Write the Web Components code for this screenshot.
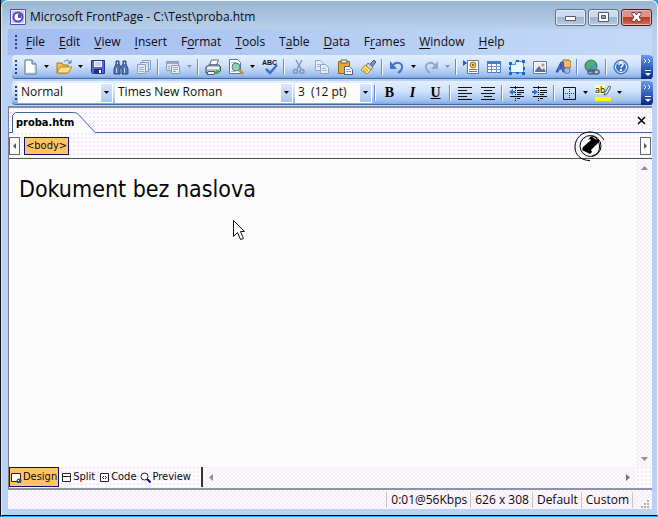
<!DOCTYPE html>
<html lang="en">
<head>
<meta charset="utf-8">
<title>Microsoft FrontPage</title>
<style>
html,body{margin:0;height:100%}
body{font:12px/16px "Open Sans","Noto Sans",sans-serif;color:#0a0a14;overflow:hidden;background:#16a4e6}
</style>
</head>
<body>
<fp-window caption="Microsoft FrontPage - C:\Test\proba.htm">
  <fp-menubar slot="menu"></fp-menubar>
  <fp-toolbar slot="bars" label="Standard">
    <fp-button icon="new" label="New" drop></fp-button>
    <fp-button icon="open" label="Open" drop></fp-button>
    <fp-button icon="save" label="Save"></fp-button>
    <fp-button icon="find" label="Find"></fp-button>
    <fp-button icon="publish" label="Publish"></fp-button>
    <fp-sep></fp-sep>
    <fp-button icon="pane" label="Toggle pane" drop="off"></fp-button>
    <fp-sep></fp-sep>
    <fp-button icon="print" label="Print"></fp-button>
    <fp-button icon="preview" label="Preview in browser" drop></fp-button>
    <fp-button icon="spell" label="Spelling"></fp-button>
    <fp-sep></fp-sep>
    <fp-button icon="cut" label="Cut"></fp-button>
    <fp-button icon="copy" label="Copy"></fp-button>
    <fp-button icon="paste" label="Paste"></fp-button>
    <fp-button icon="brush" label="Format painter"></fp-button>
    <fp-sep></fp-sep>
    <fp-button icon="undo" label="Undo" drop></fp-button>
    <fp-button icon="redo" label="Redo" drop="off"></fp-button>
    <fp-sep></fp-sep>
    <fp-button icon="component" label="Web component"></fp-button>
    <fp-button icon="table" label="Insert table"></fp-button>
    <fp-button icon="layer" label="Insert layer"></fp-button>
    <fp-button icon="picture" label="Insert picture"></fp-button>
    <fp-button icon="draw" label="Drawing"></fp-button>
    <fp-sep></fp-sep>
    <fp-button icon="link" label="Insert hyperlink"></fp-button>
    <fp-sep></fp-sep>
    <fp-button icon="help" label="Help"></fp-button>
  </fp-toolbar>
  <fp-toolbar slot="bars" label="Formatting">
    <fp-combo label="Style" value="Normal" style="--w:95px"></fp-combo>
    <fp-combo label="Font" value="Times New Roman" style="--w:178px"></fp-combo>
    <fp-combo label="Font size" value="3&nbsp; (12 pt)" style="--w:77px"></fp-combo>
    <fp-sep></fp-sep>
    <fp-button label="Bold"><b>B</b></fp-button>
    <fp-button label="Italic"><b><i>I</i></b></fp-button>
    <fp-button label="Underline"><b><u>U</u></b></fp-button>
    <fp-sep></fp-sep>
    <fp-button icon="left" label="Align left"></fp-button>
    <fp-button icon="center" label="Center"></fp-button>
    <fp-sep></fp-sep>
    <fp-button icon="outdent" label="Decrease indent"></fp-button>
    <fp-button icon="indent" label="Increase indent"></fp-button>
    <fp-sep></fp-sep>
    <fp-button icon="borders" label="Borders" drop></fp-button>
    <fp-button icon="highlight" label="Highlight" drop></fp-button>
  </fp-toolbar>
  <fp-tabstrip>proba.htm</fp-tabstrip>
  <fp-tagbar>&lt;body&gt;</fp-tagbar>
  <fp-editor>Dokument bez naslova</fp-editor>
  <fp-viewbar></fp-viewbar>
  <fp-status slot="status"></fp-status>
</fp-window>

<script>
const DITHER = 'repeating-conic-gradient(#f7ecf8 0 25%,#fbfbfb 0 50%) 0 0/4px 4px';
const DOTS = 'radial-gradient(circle at 1px 1px,#f6e6f8 1px,transparent 1px) 0 0/4px 4px,#fcfcfc';
const UI = '"DejaVu Sans Condensed","Noto Sans",sans-serif';
const ICONS = {
new:'<path d="M3 1h7l4 4v10H3z" fill="#fff" stroke="#4d6a94"/><path d="M10 1v4h4" fill="#cfdcf0" stroke="#4d6a94"/><path d="M13 7v7H5" fill="none" stroke="#b5c8e4"/>',
open:'<path d="M1 14V4h5l1 2h5v8z" fill="#f3c14d" stroke="#a9771c"/><path d="M1 14l3-6h12l-4 6z" fill="#ffe08a" stroke="#b9811a"/><path d="M8 3c2-3 5-2 6 1m1-3v3h-3" fill="none" stroke="#496ea8"/>',
save:'<path d="M1.500 1.500h13v13h-12l-1-1z" fill="#5166cf" stroke="#28338f"/><path d="M4 2h8v6H4z" fill="#f4f6ff"/><path d="M5 4h6M5 6h6" stroke="#9faae0"/><path d="M4 10h8v4H4z" fill="#283184"/><path d="M9 11h2v3H9z" fill="#fff"/>',
find:'<path d="M3 2h3v3l1 2h2l1-2V2h3v3l2 5v5H9V9H7v6H1v-5l2-5z" fill="#5473b3" stroke="#2b4984"/><path d="M3.500 9v5m8-5v5M4.500 3v2m7-2v2" stroke="#c9defc"/>',
publish:'<g fill="#dfe8f6" stroke="#8b9dbd"><path d="M6.500 1.500h8v9h-8z"/><path d="M4.500 3.500h8v9h-8z"/><path d="M1.500 5.500h8v9h-8z"/></g><path d="M3 8.500h5M3 10.500h5M3 12.500h5" stroke="#9fb0cc"/>',
pane:'<path d="M1.500 2.500h12v9h-12z" fill="#dce5f2" stroke="#8c9cb8"/><path d="M2 3h11v2H2z" fill="#98a8c4"/><path d="M6.500 6.500h8v8h-8z" fill="#e8eef8" stroke="#8c9cb8"/><path d="M8 8.500h5M8 10.500h5M8 12.500h3M3 7.500h2M3 9.500h2" stroke="#98a8c4"/>',
print:'<path d="M4.500 6l2-5h7l-2 5z" fill="#fff" stroke="#56677f"/><path d="M1 8l3-2h10l1.500 2v4L13 14H1z" fill="#b4bfce" stroke="#3b4657"/><path d="M2 8h12v2H2z" fill="#eef2f8"/><path d="M3 12.500h7l-1 3H2z" fill="#fff" stroke="#4b5767"/><path d="M11 11h3v3h-3z" fill="#1fd03b"/>',
preview:'<path d="M1.500 .5h8l3 3v11h-11z" fill="#fff" stroke="#5c749c"/><path d="M3 3.500h5M3 12.500h4" stroke="#a5bbdb"/><circle cx="8" cy="8" r="4" fill="#8fd0b8" stroke="#4a7f8e"/><path d="M11 11l4 4" stroke="#d18a35" stroke-width="2.500"/>',
spell:'<text x="0" y="6" font-family="Liberation Sans" font-weight="bold" font-size="7" fill="#111">ABC</text><path d="M4 10l4 4 7-8" fill="none" stroke="#3b70d5" stroke-width="2.500"/>',
cut:'<path d="M5 1l5 9M11 1l-5 9" fill="none" stroke="#8295b7" stroke-width="1.500"/><circle cx="4.500" cy="12.500" r="2" fill="none" stroke="#8295b7" stroke-width="1.500"/><circle cx="11" cy="12.500" r="2" fill="none" stroke="#8295b7" stroke-width="1.500"/>',
copy:'<g fill="#e5ecf7" stroke="#94a6c4"><path d="M1.500 1.500h5l3 3v7h-8z"/><path d="M6.500 5.500h5l3 3v6h-8z"/></g><path d="M3 5.500h3M3 7.500h3M8 9.500h4M8 11.500h5" stroke="#a5b5d0"/>',
paste:'<path d="M1.500 2.500h11v12h-11z" fill="#e6a63a" stroke="#94651d"/><path d="M4 1h6v3H4z" fill="#eee" stroke="#6b5b3f"/><path d="M7.500 7.500h5l3 3v5h-8z" fill="#f7fbff" stroke="#49639a"/><path d="M9 10.500h4M9 12.500h5" stroke="#85a1cf"/>',
brush:'<path d="M10 5l4-4 2 2-4 5z" fill="#7f8fae" stroke="#4f5870"/><path d="M8 4l5 4-2 3-5-4z" fill="#d3d7df" stroke="#68708a"/><path d="M5 6l6 5-4 4-6-4z" fill="#ffe27a" stroke="#b28b24"/><path d="M4 9l4 3M3 11l3 2" stroke="#cf9d2d"/>',
undo:'<path d="M4 6c4-4 10-2 9 3-.5 2-2 4-4 5" fill="none" stroke="#3f73d3" stroke-width="2"/><path d="M1 2v8h7z" fill="#3f73d3"/>',
redo:'<path d="M12 6c-4-4-10-2-9 3 .5 2 2 4 4 5" fill="none" stroke="#94a8c9" stroke-width="2"/><path d="M15 2v8H8z" fill="#94a8c9"/>',
component:'<path d="M0 1l4 3-4 3z" fill="#2457bd"/><path d="M4.500 1.500h11v13h-11z" fill="#fff" stroke="#64799e"/><circle cx="10" cy="6" r="3" fill="#f8c955" stroke="#a47522"/><circle cx="10" cy="6" r="1" fill="#805010"/><path d="M6 10.500h8M6 12.500h8" stroke="#65799e"/>',
table:'<path d="M1.500 2.500h13v11h-13z" fill="#fff" stroke="#4977b9"/><path d="M1 2h14v3H1z" fill="#487fc8"/><path d="M1 7.500h14M1 10.500h14M5.500 5v9M10.500 5v9" stroke="#6b92cb"/>',
layer:'<path d="M1.500 5.500h5v-3h8v11h-13z" fill="#e9f4ff" stroke="#4293de"/><g fill="#1769ce"><path d="M0 3h3v3H0zM13 1h3v3h-3zM0 13h3v3H0zM13 13h3v3h-3zM7 1h3v2H7zM7 13h3v2H7zM0 8h2v3H0zM14 8h2v3h-2z"/></g>',
picture:'<path d="M1.500 2.500h13v12h-13z" fill="#fff" stroke="#64799e"/><path d="M3 4h10v9H3z" fill="#dcecff"/><path d="M3 12l4-5 3 4 2-2 2 4H3z" fill="#5c6f96"/><circle cx="11" cy="6" r="1.500" fill="#ef8a35"/>',
draw:'<path d="M8 1h6l2 2v5l-2 1H8z" fill="#eebb60" stroke="#8d6b34"/><path d="M1 13L6 3h2l2 10H8l-1-3H4l-1 3zM5 8h2L6 5z" fill="#5971c7" stroke="#374b9d"/><ellipse cx="12" cy="11.500" rx="3" ry="3" fill="#a9b6dc" stroke="#6174a6"/>',
link:'<circle cx="7" cy="7" r="6" fill="#4594c7" stroke="#28677f"/><path d="M3 3l4-2 4 2-1 3-4 1-1 3-3-2zM9 8l4-1-2 4z" fill="#52b657"/><g fill="none" stroke="#555f70" stroke-width="1.500"><rect x="4" y="11" width="6" height="4" rx="2"/><rect x="9" y="11" width="6" height="4" rx="2"/></g>',
help:'<circle cx="8" cy="8" r="7" fill="#3972c9" stroke="#5277ad"/><circle cx="8" cy="8" r="5.500" fill="none" stroke="#fff"/><path d="M6 6c0-3 4-3 4-.5C10 7 8 7 8 9" fill="none" stroke="#fff" stroke-width="1.500"/><path d="M7 10h2v2H7z" fill="#fff"/>',
left:'<path d="M1 2.500h14M1 5.500h9M1 8.500h14M1 11.500h9M1 14.500h14" stroke="#111"/>',
center:'<path d="M1 2.500h14M4 5.500h8M1 8.500h14M4 11.500h8M1 14.500h14" stroke="#111"/>',
outdent:'<path d="M1 2.500h14M8 5.500h7M8 7.500h7M8 9.500h4M1 11.500h14M8 13.500h3" stroke="#111"/><path d="M6.500 1v15" stroke="#111" stroke-dasharray="1 1"/><path d="M0 7l4-3v2h2v2H4v2z" fill="#356bd0"/>',
indent:'<path d="M1 2.500h14M8 5.500h7M8 7.500h7M8 9.500h4M1 11.500h14M8 13.500h3" stroke="#111"/><path d="M6.500 1v15" stroke="#111" stroke-dasharray="1 1"/><path d="M6 7L2 4v2H0v2h2v2z" fill="#356bd0"/>',
borders:'<path d="M2.500 2.500h12v12h-12z" fill="none" stroke="#111"/><path d="M8.500 4v10M4 8.500h10" stroke="#333" stroke-dasharray="1 1"/>',
highlight:'<path d="M0 0h10v9H0z" fill="#ffffa5"/><text x="0" y="8" font-family="DejaVu Sans Condensed" font-size="9" fill="#111">ab</text><path d="M10 7l4-6 2 1-4 7-3 1z" fill="#dbe0e6" stroke="#59616e"/><path d="M0 12h16v4H0z" fill="#ff0"/>'
};
const svg = (b,w=16,h=w) => `<svg width="${w}" height="${h}" viewBox="0 0 ${w} ${h}" aria-hidden="true">${b}</svg>`;
const RESET = '*,:host{box-sizing:border-box}button{font:inherit;color:inherit;margin:0;padding:0;border:0;background:none;display:flex;align-items:center;justify-content:center}svg{display:block;flex:none}';
function define(name, css, html){
  customElements.define(name, class extends HTMLElement{
    constructor(){
      super();
      this.attachShadow({mode:'open'}).innerHTML = `<style>${RESET}${css}</style>${typeof html==='function'?html(this):html}`;
    }
  });
}
const DROP = c => svg(`<path d="M0 0h5L2.500 3z" fill="${c}"/>`,5,3);

define('fp-window',`
:host{display:flex;flex-direction:column;height:100vh;border-left:1px solid #111;border-bottom:1px solid #14b4ec}
.frame{flex:1;min-height:0;display:flex;flex-direction:column;padding:0 5px 6px 6px;border:1px solid #f0f8ff;border-bottom:1px solid #050505;border-left-color:#d5eafa;border-radius:7px 7px 0 0;background:linear-gradient(#99b4d1,#b9d0ea 28px,#b9d1f2 60px,#b9d1f2)}
header{display:flex;align-items:center;height:28px;padding:4px 0 0 2px;gap:4px;flex:none}
h1{flex:1;margin:0;font:12px/16px "Open Sans","Noto Sans",sans-serif}
.box{display:flex;gap:2px}
.box button{width:31px;height:17px;border:1px solid #5e7186;border-radius:3px;box-shadow:inset 0 0 0 1px #e1edf9;background:linear-gradient(#cadbed 48%,#9eb4cc 50%,#b8cde3)}
.box .x{border-color:#5b1620;box-shadow:inset 0 0 0 1px #eab4a8;background:linear-gradient(#dd9488 48%,#bd3924 50%,#cf6e57)}
main{flex:1;min-height:0;display:flex;flex-direction:column;border-left:1px solid #77808e;border-top:2px solid #858b9b;border-bottom:2px solid #8d93a6;background:#fcfcfc}
`,e=>`<div class="frame"><header>${svg('<path d="M.5.5h15v15H.5z" fill="#f4f2ff" stroke="#5a4ba5"/><path d="M2 2h12v12H2z" fill="#cbc5f2"/><circle cx="8" cy="8" r="4.500" fill="#fff" stroke="#5547bb" stroke-width="2"/><path d="M8 5h3v4H8z" fill="#5d50c5"/>')}<h1>${e.getAttribute('caption')}</h1><div class="box"><button aria-label="Minimize">${svg('<path d="M.5 4.500h10v4H.5z" fill="#fff" stroke="#515a66"/>',11,10)}</button><button aria-label="Maximize">${svg('<path d="M.5.5h10v9H.5z" fill="#fff" stroke="#515a66"/><path d="M3.500 3.500h4v3h-4z" fill="#8fa6bf" stroke="#515a66"/>',11,10)}</button><button class="x" aria-label="Close">${svg('<path d="M1 .5h3L5.500 3 7 .5h3v2L8 5l2 2.500v2H7L5.500 7 4 9.500H1v-2L3 5 1 2.500z" fill="#fff" stroke="#5b4048"/>',11,10)}</button></div></header><slot name="menu"></slot><slot name="bars"></slot><main><slot></slot></main><slot name="status"></slot></div>`);

define('fp-menubar',`
:host{display:block;flex:none;background:linear-gradient(90deg,#a4bbf2,#b4cdf2 50%,#c3d9f8)}
nav{display:flex;align-items:center;height:26px;gap:14px;padding-left:7px}
.grip{flex:none;width:2px;height:14px;margin-right:-5px;background:repeating-linear-gradient(#27427a 0 2px,transparent 2px 4px)}
button{font-size:12px;line-height:16px}u{text-underline-offset:2px}
`,()=>`<nav aria-label="Menu"><span class="grip"></span>${['_File','_Edit','_View','_Insert','F_ormat','_Tools','T_able','_Data','F_rames','_Window','_Help'].map(t=>`<button><span>${t.replace(/_(.)/,'<u>$1</u>')}</span></button>`).join('')}</nav>`);

define('fp-toolbar',`
:host{display:flex;flex:none;height:24px;margin:0 0 2px 4px;border-radius:4px 0 0 4px;background:linear-gradient(#e2effe,#cfe1fb 45%,#9dbfee 88%,#7fa6df);border-bottom:1px solid #3f68ae}
:host([label=Formatting]){margin-bottom:1px}
.items{flex:1;display:flex;align-items:center;min-width:0;padding-left:3px}
.grip{width:2px;height:14px;margin-right:1px;flex:none;background:repeating-linear-gradient(#27427a 0 2px,transparent 2px 4px)}
.more{width:12px;height:24px;margin-right:-1px;border-radius:0 4px 4px 0;background:linear-gradient(#6a9af0,#2d57b4 60%,#06287c)}
`,e=>`<div class="items" role="toolbar" aria-label="${e.getAttribute('label')}"><span class="grip"></span><slot></slot></div><button class="more" aria-label="Toolbar options">${svg('<path d="M1 3l2 2-2 2M5 3l2 2-2 2" fill="none" stroke="#fff"/><path d="M2 14.500h6" stroke="#fff"/><path d="M2 17h6l-3 3z" fill="#fff"/>',9,22)}</button>`);

define('fp-button',`
:host{display:flex;flex:none}
.b{width:23px;height:22px;font:14px/16px "Liberation Serif",serif;color:#000}
.d{width:11px;height:22px}
`,e=>{const i=e.getAttribute('icon'),l=e.getAttribute('label'),d=e.getAttribute('drop');
return `<button class="b" aria-label="${l}">${i?svg(ICONS[i]):'<slot></slot>'}</button>${d===null?'':`<button class="d" aria-label="${l} options">${DROP(d==='off'?'#8093b5':'#000')}</button>`}`});

define('fp-sep',`:host{display:block;flex:none;width:2px;height:16px;margin:0 2px;background:linear-gradient(90deg,#6a8ccb 50%,#f1f9ff 50%)}`,'');

define('fp-combo',`
:host{display:grid;flex:none;width:var(--w);margin-right:2px;height:20px;align-items:center}
:host([label="Font size"]){margin-right:0}
select,span{grid-area:1/1}
select{appearance:none;width:100%;height:20px;margin:0;border:1px solid #fff;border-radius:0;padding:0 12px 1px 2px;background:#fcfcfc;font:12px/16px "Open Sans","Noto Sans",sans-serif;color:#111}
span{justify-self:end;display:grid;place-items:center;width:11px;height:18px;margin-right:1px;background:linear-gradient(#d8e7fc,#a9c7f3);pointer-events:none}
`,e=>`<select aria-label="${e.getAttribute('label')}"><option>${e.getAttribute('value')}</option></select><span>${DROP('#000')}</span>`);

define('fp-tabstrip',`
:host{display:flex;flex:none;height:25px;align-items:end;background:${DOTS}}
.pre{width:3px}.rest{flex:1}.pre,.rest{align-self:stretch;border-bottom:1px solid #3964a3}
.tab{display:grid;width:84px;height:21px;justify-items:start}
.tab>*{grid-area:1/1}
.tab span{padding-left:4px;font:bold 11px/16px ${UI};color:#000}
.rest{display:flex;justify-content:end;align-items:center;padding-right:6px}
`,`<span class="pre"></span><button class="tab" role="tab" aria-selected="true">${svg('<path d="M.5 21V3.500L3.500.5h58q3 0 5 2L84 20.500V21z" fill="#fcfcfc"/><path d="M.5 21V3.500L3.500.5h58q3 0 5 2L83 20.500h1" fill="none" stroke="#3964a3"/>',84,21)}<span><slot></slot></span></button><div class="rest"><button aria-label="Close page">${svg('<path d="M1 1l7 7M8 1L1 8" stroke="#000" stroke-width="1.500"/>',9)}</button></div>`);

define('fp-tagbar',`
:host{display:flex;flex:none;position:relative;height:26px;align-items:center;gap:4px;padding-right:1px;border-bottom:1px solid #4d5a4e;background:${DOTS}}
.a{width:11px;height:18px;border:1px solid #666;background:#fcfcfc}
.t{height:18px;padding:0 1px;border:1px solid #10107c;background:#ffc468;font:11px/16px ${UI}}
.a:last-of-type{margin-left:auto}
.logo{position:absolute;right:47px;top:-2px;z-index:2}
`,`<button class="a" aria-label="Scroll tags left">${svg('<path d="M3 0v6L0 3z" fill="#555"/>',3,6)}</button><button class="t"><slot></slot></button><button class="a" aria-label="Scroll tags right">${svg('<path d="M0 0v6l3-3z" fill="#555"/>',3,6)}</button><span class="logo">${svg('<path d="M30 9C27 4 22 1 16 1 8 1 1 7 1 16c0 8 6 13.500 15 13.500" fill="none" stroke="#000"/><circle cx="16.500" cy="15" r="10.500" fill="#fcfcfc" stroke="#000"/><path d="M18 5q7 2 7.500 10T18 25" fill="none" stroke="#000"/><path d="M14 9l3-4 4 3 4 1v2l-8 8 1 2-2 2-4-2-4-2 1-3 8-7-1-1z" fill="#000"/>',31,31)}</span>`);

define('fp-editor',`
:host{display:flex;flex:1;min-height:0;position:relative;background:#fcfcfc}
p{flex:1;margin:0;padding:14px 10px;font:23px/32px ${UI};color:#050505}
.bar{width:16px;display:flex;flex-direction:column;justify-content:space-between;background:${DITHER}}
.bar button{height:17px}
.cursor{position:absolute;left:224px;top:61px}
`,`<p><slot></slot></p><div class="bar"><button aria-label="Scroll up">${svg('<path d="M0 4h7L3.500 0z" fill="#8e8e8e"/>',7,4)}</button><button aria-label="Scroll down">${svg('<path d="M0 0h7L3.500 4z" fill="#8e8e8e"/>',7,4)}</button></div><span class="cursor">${svg('<path d="M.5.500v16l4-4 3 7 3-1-3-7h4z" fill="#fff" stroke="#111"/>',13,21)}</span>`);

define('fp-viewbar',`
:host{display:flex;flex:none;height:21px;align-items:start;background:${DOTS}}
.v{height:20px;gap:1px;padding:0 1px;border:1px solid transparent;font:11px/16px ${UI}}
.on{border-color:#10107c;background:#ffc468}
.bar{flex:1;display:flex;justify-content:space-between;height:20px;margin:0 16px 0 8px;border-left:2px solid #333;padding:0 6px;background:${DITHER}}
`,`<button class="v on" aria-pressed="true">${svg('<path d="M.5 1.500h9v8h-9z" fill="#fff" stroke="#222"/><circle cx="8" cy="9" r="2.500" fill="#235a73"/><path d="M7 8h1v1H7z" fill="#fff"/>',11)}Design</button><button class="v">${svg('<path d="M1.500 1.500h8v8h-8zM1 4.500h9" fill="#fff" stroke="#222"/>',11)}Split</button><button class="v">${svg('<path d="M1.500 1.500h8v8h-8z" fill="#fff" stroke="#222"/><path d="M5 4L3.500 5.500 5 7M6 4l1.500 1.500L6 7" fill="none" stroke="#222"/>',11)}Code</button><button class="v">${svg('<circle cx="4.500" cy="4.500" r="3.500" fill="#fff" stroke="#222"/><path d="M7 7l3.500 3.500" stroke="#10107c" stroke-width="2"/>',11)}Preview</button><div class="bar"><button aria-label="Scroll left">${svg('<path d="M4 0v7L0 3.500z" fill="#8e8e8e"/>',4,7)}</button><button aria-label="Scroll right">${svg('<path d="M0 0v7l4-3.500z" fill="#777"/>',4,7)}</button></div>`);

define('fp-status',`
:host{display:flex;flex:none;justify-content:end;align-items:center;height:19px;background:${DITHER}}
span{height:16px;padding:0 3px 0 4px;border-left:1px solid #c9c2cf;line-height:16px;font-size:12px}
.g{display:grid;place-items:end;width:20px}
`,`<span>0:01@56Kbps</span><span>626 x 308</span><span>Default</span><span>Custom</span><span class="g">${svg('<path d="M6 0h2v2H6zM6 3h2v2H6zM3 3h2v2H3zM6 6h2v2H6zM3 6h2v2H3zM0 6h2v2H0z" fill="#b5acb9"/>',8)}</span>`);
</script>
</body>
</html>
